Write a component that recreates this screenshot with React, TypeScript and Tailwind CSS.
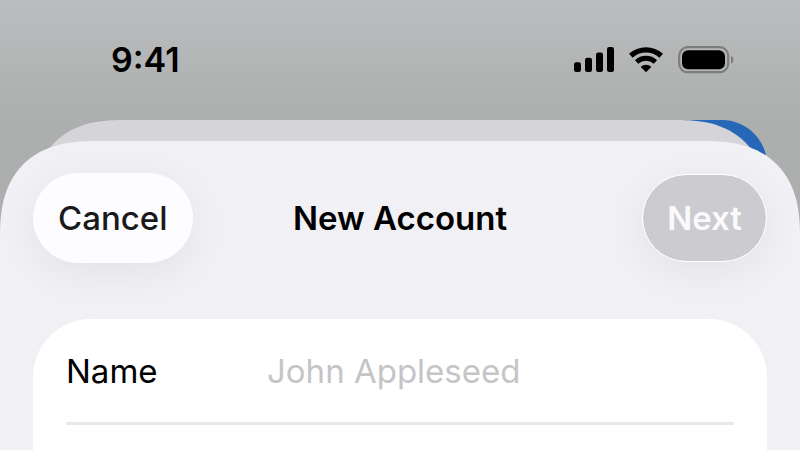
import { useState, type ReactNode } from 'react'

function SignalIcon() {
  return (
    <svg width="40" height="26" viewBox="0 0 40 26" aria-hidden="true">
      <rect x="0" y="15.3" width="7" height="9.700" rx="2.2" />
      <rect x="11" y="10.7" width="7" height="14.300" rx="2.2" />
      <rect x="22" y="5.4" width="7" height="19.600" rx="2.2" />
      <rect x="33" y="0" width="7" height="25" rx="2.2" />
    </svg>
  )
}

function WifiIcon() {
  return (
    <svg width="34" height="26" viewBox="0 0 34 26" fill="none" stroke="currentColor" aria-hidden="true">
      <path d="M1.800 8.700 A22.500 22.500 0 0 1 32.200 8.700" strokeWidth="5.3" />
      <path d="M7.600 15 A14 14 0 0 1 26.400 15" strokeWidth="5" />
      <path d="M17 25.200 L11.700 20 C14.600 17 19.400 17 22.300 20 Z" fill="currentColor" stroke="none" />
    </svg>
  )
}

function BatteryIcon() {
  return (
    <svg width="56" height="28" viewBox="0 0 56 28" aria-hidden="true">
      <rect x="1.2" y="1.2" width="49" height="25" rx="8.5" fill="none" stroke="#7c7d7d" strokeWidth="2.2" />
      <rect x="4" y="4.200" width="43" height="19" rx="6" />
      <path d="M53 10 C56.300 11 56.300 16.500 53 17.500 Z" fill="#7c7d7d" />
    </svg>
  )
}

function StatusBar() {
  return (
    <header className="flex h-30 items-center justify-between pl-[111px] pr-[66px] text-black">
      <time className="text-[34px] leading-10 font-semibold">9:41</time>
      <div className="flex items-center gap-[15px]">
        <SignalIcon />
        <WifiIcon />
        <BatteryIcon />
      </div>
    </header>
  )
}

function Sheet({ children }: { children: ReactNode }) {
  return (
    <div className="relative flex grow flex-col pt-[21px]">
      {/* Views stacked underneath the sheet, only their top edges show */}
      <div className="absolute top-0 right-[33px] h-24 w-1/2 rounded-tr-[45px] bg-[#2767b8]" />
      <div className="absolute inset-x-[33px] top-0 h-24 rounded-t-[90px] bg-[#d5d5d9] [corner-shape:superellipse(1.3)]" />
      <main className="relative flex grow flex-col rounded-t-[95px] bg-[#f0f0f5] px-[33px] pt-8 [corner-shape:superellipse(1.3)]">
        {children}
      </main>
    </div>
  )
}

export default function App() {
  const [name, setName] = useState('')

  return (
    <div className="flex min-h-screen flex-col overflow-hidden bg-[linear-gradient(#babcbe,#adafae_120px)] font-['Inter',sans-serif]">
      <StatusBar />
      <Sheet>
        <div className="grid grid-cols-[1fr_auto_1fr] items-center">
          <button
            type="button"
            className="h-[90px] justify-self-start rounded-full bg-[#fdfdff] px-[25px] text-[33px] leading-10 font-medium text-[#1a1a1c] shadow-[0_10px_40px_rgba(0,0,0,0.06)]"
          >
            Cancel
          </button>
          <h1 className="text-[33px] leading-10 font-semibold text-black">New Account</h1>
          <button
            type="button"
            disabled={!name}
            className="h-[88px] justify-self-end rounded-full border border-white bg-[#cbcbd0] bg-clip-padding px-6 text-[33px] leading-10 font-semibold text-[#fafafc] shadow-[0_10px_40px_rgba(0,0,0,0.06)]"
          >
            Next
          </button>
        </div>
        <form className="mt-14 grow rounded-t-[58px] bg-white px-[33px]">
          <div className="flex h-[106px] items-center border-b-3 border-[#e8e8e9]">
            <label htmlFor="name" className="w-[201px] shrink-0 text-[33px] leading-10 text-black">
              Name
            </label>
            <input
              id="name"
              type="text"
              value={name}
              onChange={(e) => setName(e.target.value)}
              placeholder="John Appleseed"
              className="min-w-0 grow bg-transparent text-[33px] leading-10 text-black outline-none placeholder:text-[#c5c5c6]"
            />
          </div>
        </form>
      </Sheet>
    </div>
  )
}
